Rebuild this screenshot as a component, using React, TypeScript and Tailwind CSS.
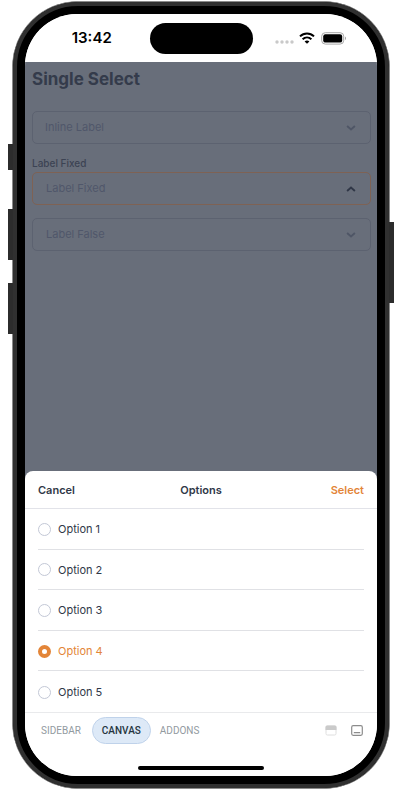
import React, { useState } from "react";

const options = ["Option 1", "Option 2", "Option 3", "Option 4", "Option 5"];

type FieldProps = {
  id: string;
  placeholder: string;
  open?: boolean;
  inset?: string;
};

function Chevron({ up }: { up?: boolean }) {
  return (
    <svg
      viewBox="0 0 10 6"
      className={`pointer-events-none col-start-1 row-start-1 mr-[15px] h-[6px] w-[10px] self-center justify-self-end ${up ? "rotate-180 text-[#303747]" : "text-[#4f5666]"}`}
      fill="none"
      stroke="currentColor"
      strokeWidth="1.9"
    >
      <path d="M1.1 1 L5 4.5 L8.9 1" />
    </svg>
  );
}

function SelectField({ id, placeholder, open, inset = "pl-[13px]" }: FieldProps) {
  return (
    <div className="grid">
      <select
        id={id}
        aria-label={placeholder}
        defaultValue=""
        className={`col-start-1 row-start-1 h-[33px] w-full appearance-none rounded-[5px] border bg-transparent text-[11px] text-[#50576a] ${inset} ${open ? "border-[#7e6254]" : "border-[#5c6270]"}`}
      >
        <option value="">{placeholder}</option>
        {options.map((o) => (
          <option key={o}>{o}</option>
        ))}
      </select>
      <Chevron up={open} />
    </div>
  );
}

function StatusBar() {
  return (
    <header className="grid h-12 shrink-0 grid-cols-[1fr_103px_1fr] items-center bg-white text-black">
      <span className="pl-[9px] text-center text-[15px] font-semibold">13:42</span>
      <div className="h-[31px] rounded-full bg-black" />
      <div className="flex items-center pl-[22px]">
        <svg viewBox="0 0 19 4" className="mt-[7px] h-[4px] w-[19px]" fill="#c9c9c9">
          <circle cx="2" cy="2" r="1.7" />
          <circle cx="7" cy="2" r="1.7" />
          <circle cx="12" cy="2" r="1.7" />
          <circle cx="17" cy="2" r="1.7" />
        </svg>
        <svg viewBox="0 0 16 12" className="ml-[5px] h-[12px] w-[16px]" fill="none" stroke="#000" strokeWidth="2">
          <path d="M1 4.4 C5 .4 11 .4 15 4.4" />
          <path d="M3.6 7.2 C6.2 4.8 9.8 4.8 12.4 7.2" />
          <path d="M8 11.8 L5.6 9.4 C7 8.2 9 8.2 10.4 9.4 Z" fill="#000" stroke="none" />
        </svg>
        <svg viewBox="0 0 26 13" className="ml-[6px] h-[13px] w-[26px]">
          <rect x=".7" y=".7" width="22" height="11.4" rx="3.6" fill="none" stroke="#a8a8a8" />
          <rect x="2.2" y="2.2" width="19" height="8.4" rx="2.2" />
          <path d="M24 4.6 C25.4 5.2 25.4 7.6 24 8.2 Z" fill="#a8a8a8" />
        </svg>
      </div>
    </header>
  );
}

function OptionSheet() {
  const [selected, setSelected] = useState("Option 4");
  return (
    <section className="rounded-t-[8px] bg-white text-[#303848]">
      <div className="grid h-[38px] grid-cols-3 items-center border-b border-[#e2e3e9] px-[13px] pt-[2px] text-[11px] font-semibold">
        <button className="justify-self-start">Cancel</button>
        <h2 className="text-center">Options</h2>
        <button className="justify-self-end text-[#e38538]">Select</button>
      </div>
      <div className="grid h-[203px] grid-rows-5 px-[13px]">
        {options.map((o) => (
          <label
            key={o}
            className={`flex items-center gap-[7px] border-b border-[#e0e1e5] pt-px text-[11px] last:border-b-0 ${selected === o ? "text-[#e38538]" : ""}`}
          >
            <input
              type="radio"
              name="option"
              checked={selected === o}
              onChange={() => setSelected(o)}
              className="size-[13px] appearance-none rounded-full border border-[#c3c8d6] checked:border-4 checked:border-[#e38538]"
            />
            {o}
          </label>
        ))}
      </div>
    </section>
  );
}

function BottomBar() {
  return (
    <footer className="flex h-[64px] shrink-0 flex-col justify-between border-t border-[#e9eaec] bg-white pt-[4px] pb-[6px]">
      <nav className="flex items-center pr-[14px] pl-4 font-['Roboto',sans-serif] text-[10px] text-[#929a9f]">
        <button>SIDEBAR</button>
        <button className="ml-[11px] h-[27px] w-[59px] rounded-full border border-[#bfd2ea] bg-[#dde9f7] font-medium text-[#25353f]">
          CANVAS
        </button>
        <button className="ml-[9px]">ADDONS</button>
        <button aria-label="Toggle interface" className="ml-auto">
          <svg viewBox="0 0 12 11" className="h-[11px] w-[12px]">
            <rect x="1" y="1" width="10" height="9" rx="1.3" fill="none" stroke="#dedede" />
            <path d="M.5 5 V2 Q.5 .5 2 .5 H10 Q11.5 .5 11.5 2 V5 Z" fill="#cacaca" />
          </svg>
        </button>
        <button aria-label="Close panel" className="ml-[14px]">
          <svg viewBox="0 0 12 11" className="h-[11px] w-[12px]" fill="none" stroke="#8c8c8c">
            <rect x=".7" y=".7" width="10.6" height="9.6" rx="1.5" strokeWidth="1.2" />
            <path d="M2.8 7.7 H9.2" strokeWidth="1.3" />
          </svg>
        </button>
      </nav>
      <div className="mx-auto h-[4px] w-[126px] rounded-full bg-black" />
    </footer>
  );
}

export default function App() {
  return (
    <main className="flex min-h-screen bg-white pt-px pr-[11px] pb-[2px] pl-[12px] font-['Inter','Noto_Sans',sans-serif]">
      <div className="relative flex flex-1 rounded-[66px] border border-[#8b8b8b] bg-black">
        <div className="absolute top-[142px] -left-[5px] h-[26px] w-[5px] bg-[#2c2c2c]" />
        <div className="absolute top-[207px] -left-[5px] h-[51px] w-[5px] bg-[#2c2c2c]" />
        <div className="absolute top-[281px] -left-[5px] h-[51px] w-[5px] bg-[#2c2c2c]" />
        <div className="absolute top-[220px] -right-[5px] h-[81px] w-[5px] bg-[#2c2c2c]" />
        <div className="flex flex-1 rounded-[65px] border-4 border-[#303030] bg-black p-[8px]">
          <div className="flex flex-1 flex-col overflow-hidden rounded-[52px] bg-white">
            <StatusBar />
            <div className="flex flex-1 flex-col bg-[#686e7a]">
              <div className="flex-1 pt-[5px] pr-[6px] pl-[7px]">
                <h1 className="text-[17px] leading-6 font-bold text-[#343b4b]">Single Select</h1>
                <div className="mt-5">
                  <SelectField id="inline" placeholder="Inline Label" inset="pl-[12px]" />
                </div>
                <label htmlFor="fixed" className="mt-[12px] mb-px block text-[10px] leading-[15px] font-medium text-[#3c4353]">
                  Label Fixed
                </label>
                <SelectField id="fixed" placeholder="Label Fixed" open />
                <div className="mt-[13px]">
                  <SelectField id="none" placeholder="Label False" />
                </div>
              </div>
              <OptionSheet />
            </div>
            <BottomBar />
          </div>
        </div>
      </div>
    </main>
  );
}
